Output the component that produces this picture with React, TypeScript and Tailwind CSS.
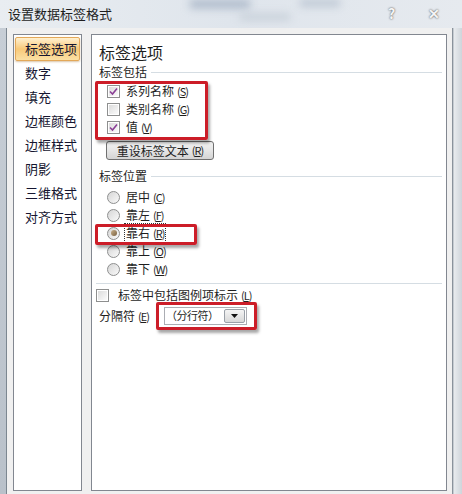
import type { ReactNode } from "react";

const font = { fontFamily: '"Noto Sans CJK SC", "Microsoft YaHei", sans-serif' };

const navItems = ["标签选项", "数字", "填充", "边框颜色", "边框样式", "阴影", "三维格式", "对齐方式"];

function Key({ k }: { k: string }) {
  return (
    <span className="ml-[3px] text-[11px] tracking-[-1px]">
      (<span className="underline">{k}</span>)
    </span>
  );
}

function CheckBox({ checked }: { checked: boolean }) {
  return (
    <span className="w-[13px] h-[13px] border border-[#8e8f8f] bg-white p-[1px] flex shrink-0">
      <span className="w-full h-full bg-gradient-to-br from-[#dcdcdc] to-[#fbfbfb] flex items-center justify-center">
        {checked && (
          <svg width="9" height="9" viewBox="0 0 9 9">
            <path d="M1 4.5 L3.5 7 L8 1.5" fill="none" stroke="#8a3f96" strokeWidth="1.6" />
          </svg>
        )}
      </span>
    </span>
  );
}

function Radio({ checked }: { checked: boolean }) {
  return (
    <span className="w-[13px] h-[13px] rounded-full border border-[#8e8f8f] bg-gradient-to-br from-[#d6d6d6] to-[#fafafa] flex items-center justify-center shrink-0">
      {checked && (
        <span className="w-[6px] h-[6px] rounded-full bg-gradient-to-br from-[#c9b08a] to-[#7a6242]" />
      )}
    </span>
  );
}

function GroupTitle({ children }: { children: ReactNode }) {
  return (
    <div className="h-4 flex items-center gap-[4px] text-[12px] text-[#1e1e1e] pr-[4px]">
      <span>{children}</span>
      <span className="flex-1 h-px bg-[#d5dde3]" />
    </div>
  );
}

function RedBox({ className }: { className: string }) {
  return (
    <div
      className={`absolute border-[3px] border-[#cc1d28] rounded-[2px] shadow-[2px_3px_3px_rgba(0,0,0,0.35)] ${className}`}
    />
  );
}

export default function App() {
  const checks = [
    { label: "系列名称", k: "S", on: true },
    { label: "类别名称", k: "G", on: false },
    { label: "值", k: "V", on: true },
  ];
  const radios = [
    { label: "居中", k: "C" },
    { label: "靠左", k: "F" },
    { label: "靠右", k: "R" },
    { label: "靠上", k: "O" },
    { label: "靠下", k: "W" },
  ];

  return (
    <div className="w-[462px] h-[494px] flex flex-col bg-[#e4e9ef] overflow-hidden" style={font}>
      {/* title bar */}
      <div className="relative h-[28px] shrink-0 bg-gradient-to-r from-[#e9edf1] via-[#dfe5ec] to-[#e6eaef] flex items-center px-2">
        <div className="absolute left-[190px] top-0 w-[60px] h-[8px] bg-[#aab7c8] blur-[4px]" />
        <div className="absolute left-[300px] top-0 w-[40px] h-[6px] bg-[#b4c0ce] blur-[4px]" />
        <div className="absolute left-[240px] top-[14px] w-[50px] h-[6px] bg-[#c3ccd6] blur-[4px]" />
        <span className="relative text-[13px] text-[#1e1e1e]">设置数据标签格式</span>
        <span className="absolute left-[388px] top-[3px] text-[14px] text-[#f5f5f5] font-bold [text-shadow:0_0_2px_#333]">?</span>
        <span className="absolute left-[428px] top-[3px] text-[14px] text-[#f5f5f5] font-bold [text-shadow:0_0_2px_#333]">✕</span>
      </div>

      <div className="flex flex-1 min-h-0">
        {/* left frame */}
        <div className="w-[7px] bg-gradient-to-b from-[#c7ced6] to-[#b9c1ca] border-r border-[#7c8791]" />

        {/* client */}
        <div className="flex-1 bg-[#f0f0f0] flex gap-[9px] pt-[6px] pl-[6px] pr-[5px] pb-[3px] border-r border-[#8a939c]">
          {/* nav list */}
          <div className="w-[69px] bg-white border border-[#828790] pt-[2px] px-[1px] flex flex-col">
            {navItems.map((item, i) => (
              <div
                key={item}
                className={`h-6 shrink-0 flex items-center pl-[9px] text-[13px] text-[#151530] ${
                  i === 0
                    ? "rounded-[2px] border border-[#e3a858] bg-gradient-to-b from-[#fff0cf] via-[#f8c978] to-[#fbe0a4] shadow-[0_1px_2px_rgba(160,110,40,0.4)]"
                    : "pl-[10px]"
                }`}
              >
                {item}
              </div>
            ))}
          </div>

          {/* options panel */}
          <div className="relative flex-1 bg-white border border-[#828790] pl-[7px] pt-[8px] flex flex-col text-[12px] text-[#1e1e1e]">
            <div className="h-[18px] flex items-center text-[16px]">标签选项</div>

            <div className="mt-[3px]">
              <GroupTitle>标签包括</GroupTitle>
            </div>
            <div className="mt-[2px] pl-[8px] flex flex-col">
              {checks.map((c) => (
                <div key={c.k} className="h-[18px] flex items-center gap-[6px]">
                  <CheckBox checked={c.on} />
                  <span>
                    {c.label}
                    <Key k={c.k} />
                  </span>
                </div>
              ))}
            </div>
            <div className="mt-[5px] ml-[7px] w-[108px] h-[19px] rounded-[3px] border border-[#707070] bg-gradient-to-b from-[#f2f2f2] via-[#e6e6e6] to-[#d4d4d4] flex items-center justify-center">
              重设标签文本
              <Key k="R" />
            </div>

            <div className="mt-[8px]">
              <GroupTitle>标签位置</GroupTitle>
            </div>
            <div className="mt-[4px] pl-[8px] flex flex-col">
              {radios.map((r) => (
                <div key={r.k} className="h-[18px] flex items-center gap-[5px]">
                  <Radio checked={r.k === "R"} />
                  <span className={r.k === "R" ? "outline-1 outline-dotted outline-[#333] px-[1px]" : "px-[1px]"}>
                    {r.label}
                    <Key k={r.k} />
                  </span>
                </div>
              ))}
            </div>

            <div className="mt-[5px] -ml-[3px] mr-[4px] h-px bg-[#d5dde3]" />

            <div className="mt-[2px] h-[18px] -ml-[3px] flex items-center gap-[9px]">
              <CheckBox checked={false} />
              <span>
                标签中包括图例项标示
                <Key k="L" />
              </span>
            </div>

            <div className="mt-[2px] h-[19px] flex items-center">
              <span className="w-[65px] whitespace-nowrap">
                分隔符
                <Key k="E" />
              </span>
              <div className="w-[83px] h-[18px] border border-[#abadb3] bg-white flex items-center">
                <span className="flex-1 pl-[1px] text-[11px] whitespace-nowrap tracking-[-0.5px] overflow-hidden">（分行符）</span>
                <span className="w-[21px] h-[14px] mr-[1px] shrink-0 rounded-[2px] border border-[#9aa0a8] bg-gradient-to-b from-[#f4f4f4] to-[#d8d8d8] flex items-center justify-center">
                  <svg width="7" height="4" viewBox="0 0 7 4">
                    <path d="M0 0 H7 L3.5 4 Z" fill="#111" />
                  </svg>
                </span>
              </div>
            </div>

            <RedBox className="left-[3px] top-[46px] w-[113px] h-[59px]" />
            <RedBox className="left-[3px] top-[189px] w-[102px] h-[21px]" />
            <RedBox className="left-[64px] top-[267px] w-[101px] h-[28px]" />
          </div>
        </div>

        {/* right frame */}
        <div className="w-[9px] bg-gradient-to-r from-[#e8ebee] to-[#cfd5db] border-l border-[#c5cbd1]" />
      </div>
    </div>
  );
}
